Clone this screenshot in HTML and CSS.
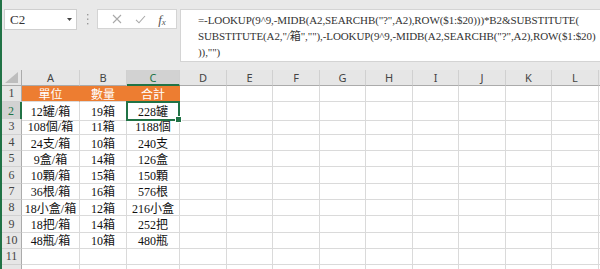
FILE: index.html
```html
<html lang="zh-Hant">
<head>
    <meta charset="UTF-8">
    <title>LOOKUP 合計</title>
    <link rel="stylesheet" href="styles.css">
</head>
<body>
<div class="app">
    <div class="edge"></div>
    <div class="main">
        <!-- barra della formula -->
        <div class="formula-bar">
            <div class="name-box">
                <span>C2</span>
                <svg width="5" height="3" viewBox="0 0 5 3"><path d="M0 0H5L2.5 3Z" fill="#444"/></svg>
            </div>
            <svg class="dots" width="3" height="11" viewBox="0 0 3 11">
                <rect x="1" y="0" width="1.4" height="1.4" fill="#9a9a9a"/>
                <rect x="1" y="4.5" width="1.4" height="1.4" fill="#9a9a9a"/>
                <rect x="1" y="9" width="1.4" height="1.4" fill="#9a9a9a"/>
            </svg>
            <div class="fx-buttons">
                <svg width="10" height="10" viewBox="0 0 10 10"><path d="M1 1L9 9M9 1L1 9" stroke="#a9a9a9" stroke-width="1.1" fill="none"/></svg>
                <svg width="11" height="9" viewBox="0 0 11 9"><path d="M1 4.8L4 7.8L10 1" stroke="#a9a9a9" stroke-width="1.1" fill="none"/></svg>
                <span class="fx">f<span class="fx-x">x</span></span>
            </div>
            <div class="formula">
                =-LOOKUP(9^9,-MIDB(A2,SEARCHB("?",A2),ROW($1:$20)))*B2&amp;SUBSTITUTE(<br>
                SUBSTITUTE(A2,"/箱",""),-LOOKUP(9^9,-MIDB(A2,SEARCHB("?",A2),ROW($1:$20)<br>
                )),"")
            </div>
        </div>

        <!-- foglio -->
        <div class="sheet">
            <div class="row head">
                <div class="corner"><svg width="14" height="11" viewBox="0 0 14 11"><path d="M13 0V11H0Z" fill="#bdbdbd"/></svg></div>
                <div class="colhead">A</div><div class="colhead">B</div><div class="colhead sel">C</div>
                <div class="colhead">D</div><div class="colhead">E</div><div class="colhead">F</div>
                <div class="colhead">G</div><div class="colhead">H</div><div class="colhead">I</div>
                <div class="colhead">J</div><div class="colhead">K</div><div class="colhead">L</div>
                <div class="colhead"></div>
            </div>
            <div class="row">
                <div class="rowhead">1</div>
                <div class="cell title">單位</div><div class="cell title">數量</div><div class="cell title">合計</div>
                <div class="cell"></div><div class="cell"></div><div class="cell"></div><div class="cell"></div><div class="cell"></div>
                <div class="cell"></div><div class="cell"></div><div class="cell"></div><div class="cell"></div><div class="cell"></div>
            </div>
            <div class="row">
                <div class="rowhead sel">2</div>
                <div class="cell">12罐/箱</div><div class="cell">19箱</div><div class="cell active">228罐</div>
                <div class="cell"></div><div class="cell"></div><div class="cell"></div><div class="cell"></div><div class="cell"></div>
                <div class="cell"></div><div class="cell"></div><div class="cell"></div><div class="cell"></div><div class="cell"></div>
            </div>
            <div class="row">
                <div class="rowhead">3</div>
                <div class="cell">108個/箱</div><div class="cell">11箱</div><div class="cell">1188個</div>
                <div class="cell"></div><div class="cell"></div><div class="cell"></div><div class="cell"></div><div class="cell"></div>
                <div class="cell"></div><div class="cell"></div><div class="cell"></div><div class="cell"></div><div class="cell"></div>
            </div>
            <div class="row">
                <div class="rowhead">4</div>
                <div class="cell">24支/箱</div><div class="cell">10箱</div><div class="cell">240支</div>
                <div class="cell"></div><div class="cell"></div><div class="cell"></div><div class="cell"></div><div class="cell"></div>
                <div class="cell"></div><div class="cell"></div><div class="cell"></div><div class="cell"></div><div class="cell"></div>
            </div>
            <div class="row">
                <div class="rowhead">5</div>
                <div class="cell">9盒/箱</div><div class="cell">14箱</div><div class="cell">126盒</div>
                <div class="cell"></div><div class="cell"></div><div class="cell"></div><div class="cell"></div><div class="cell"></div>
                <div class="cell"></div><div class="cell"></div><div class="cell"></div><div class="cell"></div><div class="cell"></div>
            </div>
            <div class="row">
                <div class="rowhead">6</div>
                <div class="cell">10顆/箱</div><div class="cell">15箱</div><div class="cell">150顆</div>
                <div class="cell"></div><div class="cell"></div><div class="cell"></div><div class="cell"></div><div class="cell"></div>
                <div class="cell"></div><div class="cell"></div><div class="cell"></div><div class="cell"></div><div class="cell"></div>
            </div>
            <div class="row">
                <div class="rowhead">7</div>
                <div class="cell">36根/箱</div><div class="cell">16箱</div><div class="cell">576根</div>
                <div class="cell"></div><div class="cell"></div><div class="cell"></div><div class="cell"></div><div class="cell"></div>
                <div class="cell"></div><div class="cell"></div><div class="cell"></div><div class="cell"></div><div class="cell"></div>
            </div>
            <div class="row">
                <div class="rowhead">8</div>
                <div class="cell">18小盒/箱</div><div class="cell">12箱</div><div class="cell">216小盒</div>
                <div class="cell"></div><div class="cell"></div><div class="cell"></div><div class="cell"></div><div class="cell"></div>
                <div class="cell"></div><div class="cell"></div><div class="cell"></div><div class="cell"></div><div class="cell"></div>
            </div>
            <div class="row">
                <div class="rowhead">9</div>
                <div class="cell">18把/箱</div><div class="cell">14箱</div><div class="cell">252把</div>
                <div class="cell"></div><div class="cell"></div><div class="cell"></div><div class="cell"></div><div class="cell"></div>
                <div class="cell"></div><div class="cell"></div><div class="cell"></div><div class="cell"></div><div class="cell"></div>
            </div>
            <div class="row">
                <div class="rowhead">10</div>
                <div class="cell">48瓶/箱</div><div class="cell">10箱</div><div class="cell">480瓶</div>
                <div class="cell"></div><div class="cell"></div><div class="cell"></div><div class="cell"></div><div class="cell"></div>
                <div class="cell"></div><div class="cell"></div><div class="cell"></div><div class="cell"></div><div class="cell"></div>
            </div>
            <div class="row">
                <div class="rowhead">11</div>
                <div class="cell"></div><div class="cell"></div><div class="cell"></div>
                <div class="cell"></div><div class="cell"></div><div class="cell"></div><div class="cell"></div><div class="cell"></div>
                <div class="cell"></div><div class="cell"></div><div class="cell"></div><div class="cell"></div><div class="cell"></div>
            </div>
            <div class="row">
                <div class="rowhead"></div>
                <div class="cell"></div><div class="cell"></div><div class="cell"></div>
                <div class="cell"></div><div class="cell"></div><div class="cell"></div><div class="cell"></div><div class="cell"></div>
                <div class="cell"></div><div class="cell"></div><div class="cell"></div><div class="cell"></div><div class="cell"></div>
            </div>
        </div>
    </div>
</div>
</body>
</html>
```

FILE: styles.css
```css
body { margin: 0; background-color: #e9e9e9; font-family: "Liberation Serif", "Noto Sans CJK TC", serif; color: #222; }
.app { display: flex; width: 600px; height: 269px; overflow: hidden; }
.edge { flex: none; width: 2px; background-color: #217346; }
.main { flex: 1; min-width: 0; display: flex; flex-direction: column; }

.formula-bar { flex: none; display: flex; align-items: flex-start; height: 70px; box-sizing: border-box; padding: 9px 0 0 2px; }
.name-box { flex: none; width: 73px; height: 21px; box-sizing: border-box; display: flex; align-items: center; justify-content: space-between; padding: 0 4px 0 5px; background-color: #fff; border: 1px solid #cfcfcf; font-size: 13px; color: #333; }
.dots { flex: none; margin: 5px 0 0 9px; }
.fx-buttons { flex: none; width: 80px; height: 20px; box-sizing: border-box; margin-left: 8px; display: flex; align-items: center; justify-content: space-around; padding: 0 4px 0 8px; background-color: #fff; border: 1px solid #d4d4d4; }
.fx { font-style: italic; font-size: 13px; color: #555; line-height: 1; }
.fx-x { font-size: 9px; position: relative; top: 1px; }
.formula { flex: 1; height: 53px; box-sizing: border-box; margin-left: 3px; padding: 2px 0 0 17px; background-color: #fff; border: 1px solid #d4d4d4; border-right: none; font-size: 11px; letter-spacing: -0.1px; line-height: 16px; color: #333; white-space: nowrap; overflow: hidden; }

.sheet { flex: 1; background-color: #fff; }
.row { display: grid; grid-template-columns: 20px 58px 47px 53px 47px 46px 47px 46px 47px 46px 47px 46px 47px 46px; height: 16.3px; }
.row.head { height: 16px; }
.row > div { box-sizing: border-box; display: flex; align-items: center; justify-content: center; overflow: hidden; white-space: nowrap; }

.corner { background-color: #e6e6e6; border-right: 1px solid #ababab; border-bottom: 1px solid #ababab; align-items: flex-end !important; justify-content: flex-end !important; padding: 0 2px 2px 0; }
.colhead { background-color: #e6e6e6; border-right: 1px solid #d0d0d0; border-bottom: 1px solid #ababab; font-family: "Noto Sans", sans-serif; font-size: 11px; color: #444; }
.colhead.sel { background-color: #d2d2d2; color: #217346; border-bottom: 2px solid #217346; }
.rowhead { background-color: #e6e6e6; border-right: 1px solid #ababab; border-bottom: 1px solid #d0d0d0; font-size: 12px; color: #444; }
.rowhead.sel { background-color: #d2d2d2; color: #217346; border-right: 2px solid #217346; }

.cell { border-right: 1px solid #dadada; border-bottom: 1px solid #dadada; font-size: 12px; color: #111; }
.cell.title { background-color: #ed7d31; border-right-color: #ed7d31; color: #fff; }
.cell.active { position: relative; overflow: visible !important; }
.cell.active::after { content: ""; position: absolute; left: -1px; top: -1px; right: -1px; bottom: -1px; border: 2px solid #217346; }
.cell.active::before { content: ""; position: absolute; right: -3px; bottom: -3px; width: 5px; height: 5px; background-color: #217346; border: 1px solid #fff; z-index: 1; }
```
